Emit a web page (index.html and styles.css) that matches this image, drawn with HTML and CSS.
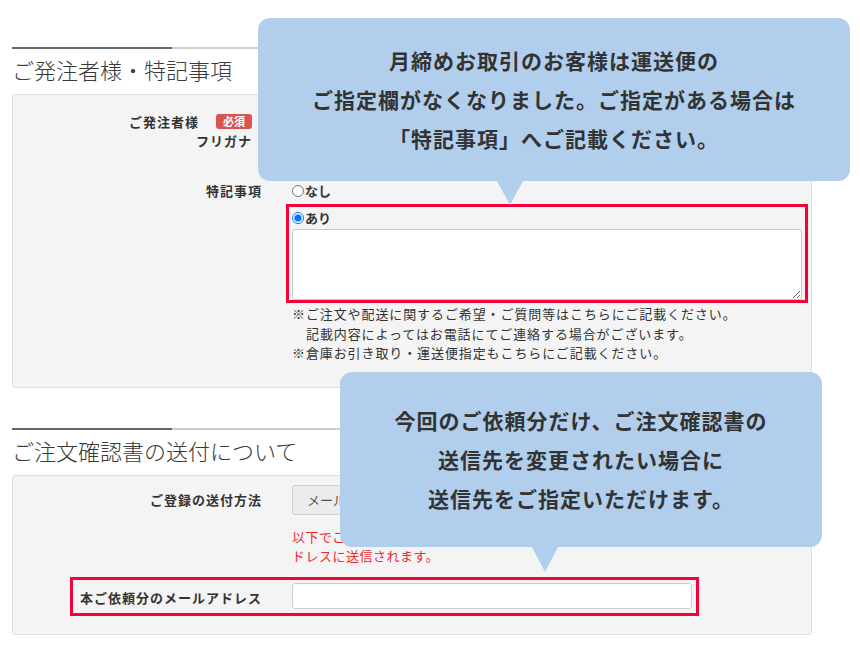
FILE: index.html
```html
<!DOCTYPE html>
<html lang="ja">
<head>
<meta charset="utf-8">
<title>ご注文情報</title>
<link rel="stylesheet" href="styles.css">
</head>
<body>
<div class="page">
  <section class="section">
    <h2 class="section-title">ご発注者様・特記事項</h2>
    <div class="panel panel-first">
      <div class="row row-name">
        <div class="label label-name">
          <div class="label-line">ご発注者様<span class="badge">必須</span></div>
          <div class="label-line">フリガナ</div>
        </div>
        <div class="field"></div>
      </div>
      <div class="row row-notes">
        <div class="label">特記事項</div>
        <div class="field">
          <label class="radio-line"><input type="radio" name="note" class="radio">なし</label>
          <div class="highlight highlight-note">
            <label class="radio-line"><input type="radio" name="note" class="radio" checked>あり</label>
            <textarea class="textarea"></textarea>
          </div>
          <p class="note">※ご注文や配送に関するご希望・ご質問等はこちらにご記載ください。</p>
          <p class="note indent">記載内容によってはお電話にてご連絡する場合がございます。</p>
          <p class="note">※倉庫お引き取り・運送便指定もこちらにご記載ください。</p>
        </div>
      </div>
    </div>
  </section>

  <section class="section section-second">
    <h2 class="section-title">ご注文確認書の送付について</h2>
    <div class="panel panel-second">
      <div class="row row-method">
        <div class="label">ご登録の送付方法</div>
        <div class="field">
          <div class="select">メールで送付</div>
          <p class="warn">以下でご入力いただいた場合は、本ご依頼分のみ下記のメールア<br>ドレスに送信されます。</p>
        </div>
      </div>
      <div class="highlight highlight-mail">
        <div class="label label-mail">本ご依頼分のメールアドレス</div>
        <input type="text" class="input">
      </div>
    </div>
  </section>

  <div class="callout callout-one">
    <p>月締めお取引のお客様は運送便の<br>ご指定欄がなくなりました。ご指定がある場合は<br>「特記事項」へご記載ください。</p>
  </div>
  <div class="callout callout-two">
    <p>今回のご依頼分だけ、ご注文確認書の<br>送信先を変更されたい場合に<br>送信先をご指定いただけます。</p>
  </div>
</div>
</body>
</html>
```

FILE: styles.css
```css
* { box-sizing: border-box; }
html, body { margin: 0; padding: 0; background: #fff; }
body {
  font-family: "Noto Sans CJK JP", "Noto Sans", sans-serif;
  color: #333;
}
.page {
  position: relative;
  width: 860px;
  height: 646px;
  padding: 47px 48px 0 12px;
  overflow: hidden;
}
.section-title {
  margin: 0 0 10px;
  padding-top: 7px;
  font-size: 22px;
  font-weight: 300;
  line-height: 30px;
  color: #3a3a3a;
  background: linear-gradient(to right, #666 160px, #cfcfcf 160px) no-repeat top left / 100% 2px;
}
.section-second { margin-top: 40px; }
.panel {
  background: #f4f4f4;
  border: 1px solid #e0e0e0;
  border-radius: 3px;
}
.panel-first { height: 294px; padding-top: 17px; }
.panel-second { height: 160px; padding-top: 9px; }
.row {
  display: grid;
  grid-template-columns: 249px 1fr;
  column-gap: 30px;
}
.row-notes { margin-top: 31px; }
.label {
  text-align: right;
  font-size: 13px;
  letter-spacing: 1px;
  font-weight: 700;
  line-height: 19px;
  color: #333;
}
.label-name {
  display: flex;
  flex-direction: column;
  align-items: flex-end;
  padding-right: 10px;
}
.label-line { display: flex; align-items: center; height: 19px; }
.badge {
  display: inline-block;
  margin-left: 17px;
  width: 36px;
  height: 15px;
  line-height: 15px;
  text-align: center;
  background: #d9534f;
  color: #fff;
  font-size: 11px;
  letter-spacing: 0;
  border-radius: 3px;
}
.radio-line {
  display: flex;
  align-items: center;
  height: 19px;
  font-size: 13px;
  font-weight: 700;
  color: #333;
}
.radio {
  margin: 0 1px 0 0;
  width: 12px;
  height: 12px;
}
.row-notes .label { line-height: 19px; }
.highlight-note {
  margin: 4px 0 0 -6px;
  width: 522px;
  border: 3px solid #f5003a;
  padding: 1px 3px 0 3px;
}
.textarea {
  display: block;
  margin-top: 2px;
  width: 510px;
  height: 71px;
  border: 1px solid #c9c9c9;
  border-radius: 3px;
  background: #fff;
  resize: vertical;
}
.note {
  margin: 0;
  font-size: 13px;
  letter-spacing: 0.9px;
  line-height: 19.5px;
  color: #333;
}
.highlight-note + .note { margin-top: 1px; }
.indent { padding-left: 14px; }
.row-method .label { align-self: start; line-height: 30px; }
.select {
  width: 240px;
  height: 30px;
  line-height: 28px;
  padding-left: 14px;
  border: 1px solid #cfcfcf;
  border-radius: 3px;
  background: #ececec;
  font-size: 13px;
  color: #555;
}
.warn {
  margin: 12px 0 0;
  font-size: 13px;
  letter-spacing: 0.5px;
  line-height: 19px;
  color: #f2282d;
}
.highlight-mail {
  display: flex;
  align-items: center;
  margin: 12px 0 0 57px;
  width: 629px;
  border: 3px solid #f5003a;
  padding: 3px 4px 4px 7px;
}
.label-mail {
  width: 182px;
  flex: none;
  margin-top: 3px;
}
.input {
  margin-left: 30px;
  width: 400px;
  height: 26px;
  border: 1px solid #cfcfcf;
  border-radius: 3px;
  background: #fff;
}
.callout {
  position: absolute;
  display: flex;
  align-items: center;
  justify-content: center;
  background: #b1cfec;
  border-radius: 12px;
  text-align: center;
  color: #333;
}
.callout p {
  margin: 0;
  font-size: 21px;
  font-weight: 700;
  letter-spacing: 1px;
  line-height: 39px;
}
.callout::after {
  content: "";
  position: absolute;
  top: 100%;
  border-top: 24px solid #b1cfec;
  border-left: 13.5px solid transparent;
  border-right: 13.5px solid transparent;
}
.callout-one {
  left: 258px;
  top: 18px;
  width: 592px;
  height: 163px;
}
.callout-one::after { left: 239px; }
.callout-two {
  left: 340px;
  top: 372px;
  width: 482px;
  height: 175px;
}
.callout-two::after { left: 192px; border-top-width: 25px; }
```
